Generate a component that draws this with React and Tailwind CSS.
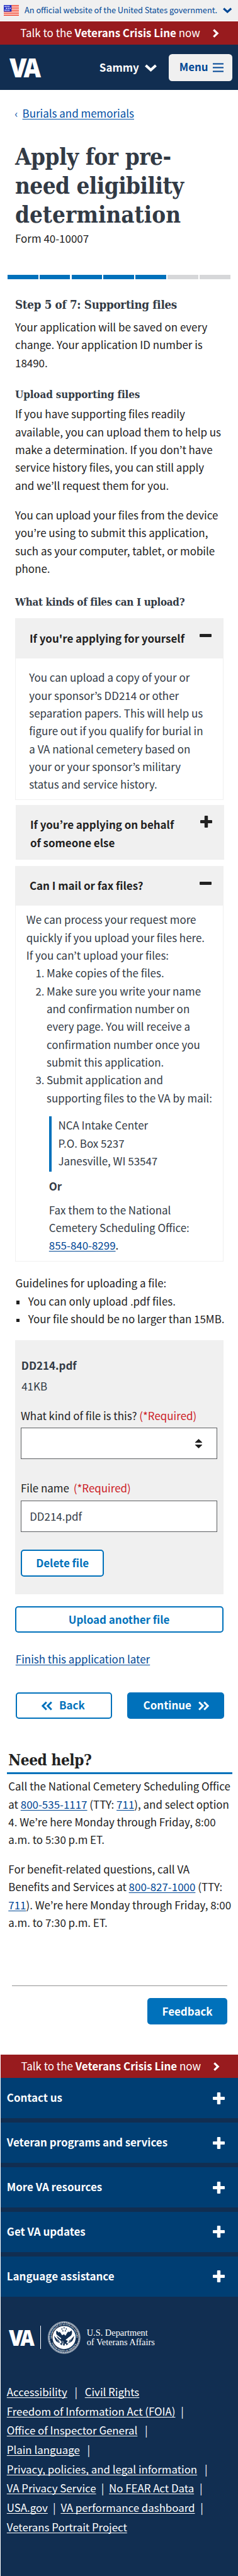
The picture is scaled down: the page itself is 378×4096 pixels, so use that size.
const SANS = "font-['Noto_Sans_CJK_KR','Noto_Sans',sans-serif]";
const SLAB = "font-['DejaVu_Serif_Condensed','DejaVu_Serif',serif]";
const LINK = "underline [text-decoration-skip-ink:none] decoration-1 underline-offset-[2px]";

function Lines({ items, className = '' }) {
  return (
    <div className={className}>
      {items.map((line, i) => (
        <div key={i} className="h-[28.34px] whitespace-nowrap">
          {line}
        </div>
      ))}
    </div>
  );
}

function Tel({ children }) {
  return <a className={`text-[#004795] ${LINK}`}>{children}</a>;
}

function Minus() {
  return <span className="block h-[5px] w-[19px] rounded-[1px] bg-[#212121]" />;
}

function Plus({ className = '' }) {
  return (
    <svg viewBox="0 0 19 19" className={`h-[19px] w-[19px] ${className}`} fill="currentColor">
      <rect x="0" y="6.9" width="19" height="5.2" rx="1.1" />
      <rect x="6.8" y="0" width="5.4" height="19" rx="1.1" />
    </svg>
  );
}

function ChevronDown({ className }) {
  return (
    <svg viewBox="0 0 19 12" className={className} fill="none" stroke="currentColor" strokeWidth="4.2">
      <path d="M1.5 2 9.5 9.2 17.5 2" />
    </svg>
  );
}

function DoubleChevron({ className = '' }) {
  return (
    <svg viewBox="0 0 17 15" className={`h-[15px] w-[17px] ${className}`} fill="none" stroke="currentColor" strokeWidth="3">
      <path d="M1.2 1.5 7.2 7.5 1.2 13.5M9.2 1.5 15.2 7.5 9.2 13.5" />
    </svg>
  );
}

function CrisisBar({ className = '' }) {
  return (
    <div className={`flex items-center bg-[#981b1e] text-white ${className}`}>
      <div className="w-[284px] whitespace-nowrap pb-px">
        Talk to the <b className="font-bold">Veterans Crisis Line</b> now
      </div>
      <svg viewBox="0 0 10 14" className="ml-[22px] h-[14px] w-[10px]" fill="none" stroke="currentColor" strokeWidth="3.2">
        <path d="M1.3 1.3 7.2 7 1.3 12.7" />
      </svg>
    </div>
  );
}

function VaMark({ className }) {
  return (
    <svg viewBox="0 0 50 31" className={`overflow-visible ${className}`} preserveAspectRatio="none" fontFamily="Open Sans" fontWeight="800" fontSize="42.8" fill="#fff">
      <text x="0" y="30.7" textLength="27.6" lengthAdjust="spacingAndGlyphs">V</text>
      <text x="22.4" y="30.7" textLength="27.6" lengthAdjust="spacingAndGlyphs">A</text>
    </svg>
  );
}

function Flag() {
  return (
    <svg viewBox="0 0 24 17" className="h-[17px] w-[24px]">
      <rect width="24" height="17" fill="#fff" />
      {[0, 1, 2, 3, 4, 5, 6].map((i) => (
        <rect key={i} y={i * 2.62} width="24" height="1.31" fill="#f0341a" />
      ))}
      <rect width="12.3" height="10.4" fill="#2330c4" />
      {[0, 1, 2].map((r) =>
        [0, 1, 2].map((c) => (
          <rect key={`${r}-${c}`} x={1.4 + c * 2.9 + (r % 2) * 1.9} y={1.4 + r * 3} width="1.7" height="1.7" fill="#fff" />
        ))
      )}
    </svg>
  );
}

function Seal() {
  return (
    <svg viewBox="0 0 104 104" className="h-[51.7px] w-[51.7px] overflow-visible">
      <circle cx="52" cy="52" r="51" fill="none" stroke="#fff" strokeWidth="1.3" />
      <circle cx="52" cy="52" r="47.8" fill="none" stroke="#fff" strokeWidth="3.6" strokeDasharray="2 1.2" />
      <circle cx="52" cy="52" r="37" fill="#fff" />
      <defs>
        <path id="sealTop" d="M13.6 58A39 39 0 1 1 90.4 58" />
        <path id="sealBottom" d="M9 62A44 44 0 0 0 95 62" />
      </defs>
      <g fontFamily="Liberation Serif" fontWeight="700" fontSize="6.6" fill="#fff">
        <text>
          <textPath href="#sealTop" textLength="128" startOffset="3">DEPARTMENT OF VETERANS AFFAIRS</textPath>
        </text>
        <text>
          <textPath href="#sealBottom" textLength="100" startOffset="8">UNITED STATES OF AMERICA</textPath>
        </text>
      </g>
      <g fill="#112e51">
        <path d="M27 30c4 1 6 4 9 6l1-3c4 3 6 8 9 12l4-3 5 2 1 3c3-5 5-11 10-15l1 3 9-6c3 7 1 14-4 19l-7 5-4 5 2 8-4 2 1 6-5-3-2 7-4-1-1-7-5 3v-8l-4-5c-8-4-14-14-12-30z" />
        <path d="M20 46c4 6 9 11 15 14l4 9c-9 0-17-6-19-23zM84 46c-4 6-9 11-15 14l-4 9c9 0 17-6 19-23zM38 72l8-3-1 8zM66 72l-8-3 1 8z" />
        <circle cx="52" cy="21" r="2" />
        <circle cx="45" cy="24.5" r="2" />
        <circle cx="59" cy="24.5" r="2" />
        <circle cx="48" cy="30.5" r="2" />
        <circle cx="56" cy="30.5" r="2" />
      </g>
      <path d="M20 38 42 56M84 41 58 60" stroke="#fff" strokeWidth="3.4" />
      <path d="M27 56l10 6M30 62l9 5M77 56l-10 6M74 62l-9 5M46 62v8M50 64v9" stroke="#fff" strokeWidth="1.2" />
    </svg>
  );
}

const Bar = ({ className }) => <span className={`flex w-0 justify-center ${className}`}>|</span>;
const F = ({ children }) => <a className={LINK}>{children}</a>;

export default function App() {
  return (
    <div className={`flex h-[4096px] w-[378px] flex-col overflow-hidden bg-white text-[16.96px] leading-[28.34px] text-[#212121] ${SANS}`}>
      <div className="flex h-[33.7px] shrink-0 items-center border-b border-white bg-[#f0f0f0] pl-[6px] text-[#004795]">
        <Flag />
        <span className="ml-[9px] w-[307px] whitespace-nowrap text-[12.76px]">An official website of the United States government.</span>
        <ChevronDown className="ml-[8.4px] h-[9px] w-[14.4px]" />
      </div>
      <CrisisBar className="h-[37.7px] shrink-0 pl-[32.2px]" />
      <header className="flex h-[72px] shrink-0 items-center bg-[#112e51] pl-[14.5px] pr-[9.4px] text-white">
        <VaMark className="h-[31px] w-[50px]" />
        <span className="ml-auto font-bold">Sammy</span>
        <ChevronDown className="ml-[9.3px] mt-[2px] h-[12px] w-[19px]" />
        <button className="ml-[19px] flex h-[43.4px] w-[100.5px] items-center rounded-[5.5px] bg-[#f0f0f0] pl-[16.6px] font-bold text-[#004795]">
          <span className="w-[45px] pb-[2px] text-left">Menu</span>
          <svg viewBox="0 0 17 15" className="ml-[8px] h-[15px] w-[17px]" stroke="currentColor" strokeWidth="2.1">
            <path d="M0 1.5H17M0 7.5H17M0 13.5H17" />
          </svg>
        </button>
      </header>

      <main className="shrink-0 pl-[24px]">
        <nav className="mt-[22.7px] flex h-[28.34px] whitespace-nowrap text-[#004fa5]">
          <span className="-ml-[0.8px] w-[12.4px]">‹</span>
          <a className={LINK}>Burials and memorials</a>
        </nav>
        <h1 className={`mt-[32.8px] whitespace-nowrap text-[36.5px] font-bold leading-[46px] text-[#323a45] ${SLAB}`}>
          <span className="block tracking-[-0.45px]">Apply for pre-</span>
          <span className="block tracking-[-0.52px]">need eligibility</span>
          <span className="block">determination</span>
        </h1>
        <Lines items={['Form 40-10007']} />
        <div className="-ml-[12.2px] mt-[43.5px] flex h-[6.8px] w-[354px] gap-[2.2px]">
          {[1, 2, 3, 4, 5, 6, 7].map((n) => (
            <span key={n} className={`flex-1 ${n < 6 ? 'bg-[#0071bb]' : 'bg-[#d6d7d9]'}`} />
          ))}
        </div>
        <h2 className={`mt-[26.8px] h-[28px] whitespace-nowrap text-[18.6px] font-bold leading-[28px] tracking-[-0.26px] text-[#323a45] ${SLAB}`}>
          Step 5 of 7: Supporting files
        </h2>
        <Lines className="mt-[7.4px]" items={['Your application will be saved on every', 'change. Your application ID number is', '18490.']} />
        <h3 className={`mt-[21.7px] h-[28px] whitespace-nowrap text-[16.9px] font-bold leading-[28px] tracking-[-0.1px] text-[#323a45] ${SLAB}`}>
          Upload supporting files
        </h3>
        <Lines
          className="mt-[3.7px]"
          items={[
            'If you have supporting files readily',
            'available, you can upload them to help us',
            'make a determination. If you don’t have',
            'service history files, you can still apply',
            'and we’ll request them for you.',
          ]}
        />
        <Lines
          className="mt-[18.9px]"
          items={['You can upload your files from the device', 'you’re using to submit this application,', 'such as your computer, tablet, or mobile', 'phone.']}
        />
        <h3 className={`mt-[25.1px] h-[28px] whitespace-nowrap text-[16.9px] font-bold leading-[28px] tracking-[-0.34px] text-[#323a45] ${SLAB}`}>
          What kinds of files can I upload?
        </h3>

        <section className="-ml-[0.4px] mt-[12.1px] w-[331px]">
          <div className="flex h-[63.8px] justify-between bg-[#f0f0f0] pl-[23.4px] pr-[19px] pt-[17.8px] font-bold">
            If you're applying for yourself
            <span className="pt-[7.3px]"><Minus /></span>
          </div>
          <div className="h-[225.1px] border-x border-b border-[#f0f0f0] pl-[21.7px] pt-[16.1px] text-[#323a45]">
            <Lines
              items={[
                'You can upload a copy of your or',
                'your sponsor’s DD214 or other',
                'separation papers. This will help us',
                'figure out if you qualify for burial in',
                'a VA national cemetery based on',
                'your or your sponsor’s military',
                'status and service history.',
              ]}
            />
          </div>
        </section>
        <section className="ml-[0.8px] mt-[7.4px] flex h-[87.5px] w-[331px] justify-between bg-[#f0f0f0] pl-[23.1px] pr-[19px] pt-[17.8px] font-bold">
          <Lines items={['If you’re applying on behalf', 'of someone else']} />
          <Plus />
        </section>
        <section className="-ml-[0.4px] mt-[9.5px] w-[331px]">
          <div className="flex h-[63.8px] justify-between bg-[#f0f0f0] pl-[23.4px] pr-[19px] pt-[17.8px] font-bold">
            Can I mail or fax files?
            <span className="pt-[7.3px]"><Minus /></span>
          </div>
          <div className="h-[565.2px] border-x border-b border-[#f0f0f0] pl-[17.2px] pt-[7.8px] text-[#323a45]">
            <Lines items={['We can process your request more', 'quickly if you upload your files here.', 'If you can’t upload your files:']} />
            <ol className="pl-[14.6px]">
              <li className="flex">
                <span className="w-[17.6px]">1.</span>
                <Lines items={['Make copies of the files.']} />
              </li>
              <li className="flex">
                <span className="w-[17.6px]">2.</span>
                <Lines
                  items={['Make sure you write your name', 'and confirmation number on', 'every page. You will receive a', 'confirmation number once you', 'submit this application.']}
                />
              </li>
              <li className="flex">
                <span className="w-[17.6px]">3.</span>
                <Lines items={['Submit application and', 'supporting files to the VA by mail:']} />
              </li>
            </ol>
            <div className="ml-[36px] mt-[15.6px] h-[87.3px] border-l-[4px] border-[#0071bb] pl-[10.6px]">
              <Lines items={['NCA Intake Center', 'P.O. Box 5237', 'Janesville, WI 53547']} />
            </div>
            <Lines className="ml-[36px] mt-[8.9px] font-bold" items={['Or']} />
            <Lines
              className="ml-[36px] mt-[9.7px]"
              items={['Fax them to the National', 'Cemetery Scheduling Office:', <><Tel>855-840-8299</Tel><span className="text-black">.</span></>]}
            />
          </div>
        </section>

        <p className="ml-[0.6px] mt-[20.8px] h-[28.34px]">Guidelines for uploading a file:</p>
        <ul className="ml-[1.5px]">
          {['You can only upload .pdf files.', 'Your file should be no larger than 15MB.'].map((t) => (
            <li key={t} className="flex h-[28.34px] items-center whitespace-nowrap">
              <span className="mr-[13.8px] mt-[4px] h-[5.5px] w-[5.5px] bg-[#212121]" />
              {t}
            </li>
          ))}
        </ul>

        <section className="-ml-[0.4px] mt-[19.4px] h-[404.1px] w-[331px] bg-[#f0f0f0] pl-[9.4px] pt-[25.9px]">
          <Lines className="ml-[0.8px] font-bold text-[#323a45]" items={['DD214.pdf']} />
          <Lines className="ml-[1.2px] mt-[4.6px] text-[#323a45]" items={['41KB']} />
          <div className="mt-[18.6px] h-[28.34px] whitespace-nowrap">
            What kind of file is this? <span className="text-[#cd2026]">(*Required)</span>
          </div>
          <div className="mt-[5.5px] flex h-[49.5px] w-[312px] items-center justify-end border border-[#5b5d60] bg-white pr-[23.4px]">
            <svg viewBox="0 0 11 15" className="h-[15px] w-[11px]" fill="#212121">
              <path d="M5.5 0 11 5.2V6.1H0V5.2ZM5.5 15 11 9.8V8.9H0V9.8Z" />
            </svg>
          </div>
          <div className="mt-[32.4px] h-[28.34px] whitespace-nowrap">
            File name <span className="ml-[3px] text-[#cd2026]">(*Required)</span>
          </div>
          <div className="mt-[5.5px] h-[49.5px] w-[312px] border border-[#5b5d60] bg-white pl-[13.2px] pt-[9.5px] text-[#323a45]">DD214.pdf</div>
          <button className="mt-[28.5px] flex h-[42.4px] w-[132.4px] items-center justify-center rounded-[5px] border-2 border-[#0071bb] bg-white font-bold text-[#0071bb]">
            Delete file
          </button>
        </section>

        <button className="-ml-[0.4px] mt-[18.7px] flex h-[42.7px] w-[331px] items-center justify-center rounded-[5px] border-2 border-[#0071bb] bg-white font-bold text-[#0071bb]">
          Upload another file
        </button>
        <div className="ml-[0.8px] mt-[28px] h-[28.34px] whitespace-nowrap">
          <Tel>Finish this application later</Tel>
        </div>
        <div className="ml-[0.8px] mt-[38.1px] flex gap-[23.6px] font-bold">
          <button className="flex h-[42.4px] w-[153.6px] items-center rounded-[5px] border-2 border-[#0071bb] bg-white pl-[39.2px] text-[#0071bb]">
            <DoubleChevron className="mt-px rotate-180" />
            <span className="ml-[11px] pb-px">Back</span>
          </button>
          <button className="flex h-[42.4px] w-[153.6px] items-center rounded-[5px] bg-[#0071bb] pl-[25.6px] text-white">
            <span className="w-[87.2px] pb-px text-left">Continue</span>
            <DoubleChevron className="mt-px" />
          </button>
        </div>
      </main>

      <section className="shrink-0 pl-[13.3px]">
        <h2 className={`mt-[49.8px] h-[32px] whitespace-nowrap text-[24.2px] font-bold leading-[32px] tracking-[-0.43px] ${SLAB}`}>Need help?</h2>
        <div className="-ml-[2px] mt-[2.8px] h-[3.4px] w-[357.8px] bg-[#0071bb]" />
        <Lines
          className="mt-[5.1px]"
          items={[
            <span className="tracking-[-0.02px]">Call the National Cemetery Scheduling Office</span>,
            <>at <Tel>800-535-1117</Tel> (TTY: <Tel>711</Tel>), and select option</>,
            '4. We’re here Monday through Friday, 8:00',
            'a.m. to 5:30 p.m ET.',
          ]}
        />
        <Lines
          className="mt-[18.5px]"
          items={[
            'For benefit-related questions, call VA',
            <>Benefits and Services at <Tel>800-827-1000</Tel> (TTY:</>,
            <><Tel>711</Tel>). We’re here Monday through Friday, 8:00</>,
            'a.m. to 7:30 p.m. ET.',
          ]}
        />
      </section>
      <div className="ml-[18.8px] mt-[85.7px] flex w-[342.6px] shrink-0 flex-col items-end border-t border-[#919191] pt-[18.9px]">
        <button className="h-[42.5px] w-[127.6px] rounded-[5px] bg-[#0071bb] font-bold text-white">Feedback</button>
      </div>

      <footer className="ml-[1px] mt-[47.2px] flex grow flex-col bg-[#112e51] text-white">
        <CrisisBar className="h-[37.9px] shrink-0 pl-[32.4px]" />
        <div className="flex flex-col gap-[7.1px]">
          {['Contact us', 'Veteran programs and services', 'More VA resources', 'Get VA updates', 'Language assistance'].map((t) => (
            <div key={t} className="flex h-[63.76px] items-center justify-between bg-[#003e73] pl-[9.8px] pr-[21px] font-bold">
              <span className="pb-[1.6px]">{t}</span>
              <Plus />
            </div>
          ))}
        </div>
        <div className="ml-[13px] mt-[39.3px] flex h-[51.7px] items-center">
          <VaMark className="h-[26px] w-[41px]" />
          <span className="ml-[9.4px] h-[37px] w-px bg-white" />
          <span className="ml-[10.6px]"><Seal /></span>
          <div className="ml-[10px] whitespace-nowrap font-['Liberation_Serif',serif] text-[14.4px] leading-[14.4px]">
            U.S. Department
            <br />
            of Veterans Affairs
          </div>
        </div>
        <div className="ml-[9.8px] mt-[45.4px] whitespace-nowrap text-[16.85px] leading-[30.7px]">
          <div className="flex"><F>Accessibility</F><Bar className="ml-[14px] mr-[14px]" /><F>Civil Rights</F></div>
          <div className="flex"><F>Freedom of Information Act (FOIA)</F><Bar className="ml-[11px]" /></div>
          <div className="flex"><F>Office of Inspector General</F><Bar className="ml-[14px]" /></div>
          <div className="flex"><F>Plain language</F><Bar className="ml-[14px]" /></div>
          <div className="flex"><F>Privacy, policies, and legal information</F><Bar className="ml-[14px]" /></div>
          <div className="flex"><F>VA Privacy Service</F><Bar className="ml-[10.5px] mr-[10px]" /><F>No FEAR Act Data</F><Bar className="ml-[11px]" /></div>
          <div className="flex"><F>USA.gov</F><Bar className="ml-[10.5px] mr-[10px]" /><F>VA performance dashboard</F><Bar className="ml-[11px]" /></div>
          <div className="flex"><F>Veterans Portrait Project</F></div>
        </div>
      </footer>
    </div>
  );
}
